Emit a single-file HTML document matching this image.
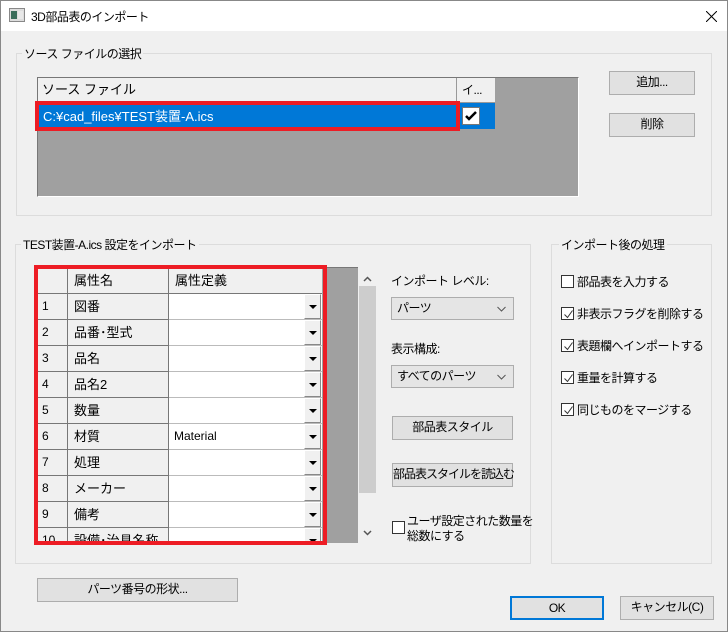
<!DOCTYPE html>
<html><head><meta charset="utf-8"><style>
*{box-sizing:border-box;margin:0;padding:0}
body{width:728px;height:632px;background:#f0f0f0;font-family:"Liberation Sans","Noto Sans CJK JP",sans-serif;font-size:12px;color:#000;position:relative;overflow:hidden;letter-spacing:-0.5px}
.a{position:absolute;white-space:nowrap}
.win{left:0;top:0;width:728px;height:632px;border:1px solid #888}
.title{left:1px;top:1px;width:726px;height:30px;background:#fff}
.grp{border:1px solid #dcdcdc}
.lbl{background:#f0f0f0;padding:0 2px}
.btn{background:#e1e1e1;border:1px solid #adadad;text-align:center;line-height:21px}
.cb{width:13px;height:13px;border:1px solid #333;background:#fff}
.cb svg{position:absolute;left:1px;top:1px}
.combo{background:#e5e5e5;border:1px solid #adadad;padding-left:5px;line-height:20px}
.cell{border-right:1px solid #777;border-bottom:1px solid #777;background:#f0f0f0;padding-left:6px;line-height:25px;font-size:13px;letter-spacing:0}
.vc{background:#fff;border-bottom:1px solid #bbb;padding-left:5px;line-height:24px;letter-spacing:0}
.dd{width:17px;height:25px;background:#f0f0f0;border:1px solid #fff;border-right-color:#888;border-bottom-color:#888}
.dd:after{content:"";position:absolute;left:4px;top:10px;border-left:4px solid transparent;border-right:4px solid transparent;border-top:4px solid #000}
</style></head><body>
<div class="a win"></div>
<div class="a title"></div>
<svg class="a" style="left:9px;top:8px" width="16" height="14"><rect x="0.5" y="0.5" width="15" height="13" fill="#ddd" stroke="#888"/><rect x="2" y="3" width="6" height="8" fill="#3a6d5a"/><rect x="9" y="3" width="5" height="8" fill="#e8e8e8"/></svg>
<div class="a" style="left:31px;top:8px;font-size:12px">3D部品表のインポート</div>
<svg class="a" style="left:706px;top:11px" width="11" height="11"><path d="M0 0L11 11M11 0L0 11" stroke="#000" stroke-width="1"/></svg>

<div class="a grp" style="left:16px;top:53px;width:696px;height:163px"></div>
<div class="a lbl" style="left:22px;top:45px">ソース ファイルの選択</div>
<div class="a" style="left:37px;top:77px;width:542px;height:120px;background:#a0a0a0;border:1px solid #fff;border-top-color:#777;border-left-color:#777"></div>
<div class="a" style="left:38px;top:78px;width:419px;height:25px;background:#f0f0f0;border-right:1px solid #999;border-bottom:1px solid #999;padding-left:4px;line-height:24px;font-size:13px;letter-spacing:0">ソース ファイル</div>
<div class="a" style="left:457px;top:78px;width:38px;height:25px;background:#f0f0f0;border-bottom:1px solid #999;padding-left:5px;line-height:24px">イ...</div>
<div class="a" style="left:38px;top:103px;width:457px;height:26px;background:#0078d7"></div>
<div class="a" style="left:43px;top:106px;color:#fff;font-size:13px;letter-spacing:0">C:¥cad_files¥TEST装置-A.ics</div>
<div class="a" style="left:462px;top:107px;width:18px;height:18px;background:#fff;border:1px solid #777"><svg width="16" height="16"><path d="M3 8l3 3 7-7" stroke="#000" stroke-width="2.5" fill="none"/></svg></div>
<div class="a" style="left:35px;top:101px;width:425px;height:30px;border:4px solid #ed1c24"></div>
<div class="a btn" style="left:609px;top:71px;width:86px;height:24px">追加...</div>
<div class="a btn" style="left:609px;top:113px;width:86px;height:24px">削除</div>

<div class="a grp" style="left:15px;top:244px;width:516px;height:320px"></div>
<div class="a lbl" style="left:21px;top:236px">TEST装置-A.ics 設定をインポート</div>
<div class="a" style="left:37px;top:267px;width:321px;height:276px;background:#a0a0a0;border-top:1px solid #777"></div>
<div class="a" style="left:358px;top:267px;width:19px;height:276px;background:#f0f0f0"></div>
<div class="a" style="left:359px;top:286px;width:17px;height:207px;background:#cdcdcd"></div>
<svg class="a" style="left:363px;top:276px" width="9" height="6"><path d="M1 5l3.5-3.5L8 5" stroke="#555" stroke-width="1.5" fill="none"/></svg>
<svg class="a" style="left:363px;top:530px" width="9" height="6"><path d="M1 1l3.5 3.5L8 1" stroke="#555" stroke-width="1.5" fill="none"/></svg>
<div id="grid" class="a" style="left:38px;top:268px;width:284px;height:274px;overflow:hidden">
<div class="a cell" style="left:0;top:0;width:30px;height:26px"></div>
<div class="a cell" style="left:30px;top:0;width:101px;height:26px">属性名</div>
<div class="a cell" style="left:131px;top:0;width:153px;height:26px;border-right:none">属性定義</div>
</div>
<script>
var n=["図番","品番･型式","品名","品名2","数量","材質","処理","メーカー","備考","設備･治具名称"];
var g=document.getElementById('grid'),h='';
for(var i=0;i<10;i++){var t=26+26*i;
h+='<div class="a cell" style="left:0;top:'+t+'px;width:30px;height:26px;font-size:12px;padding-left:4px">'+(i+1)+'</div>';
h+='<div class="a cell" style="left:30px;top:'+t+'px;width:101px;height:26px">'+n[i]+'</div>';
h+='<div class="a vc" style="left:131px;top:'+t+'px;width:153px;height:26px">'+(i==5?'Material':'')+'</div>';
h+='<div class="a dd" style="left:266px;top:'+t+'px"></div>';}
g.innerHTML+=h;
</script>
<div class="a" style="left:34px;top:265px;width:293px;height:280px;border:4px solid #ed1c24"></div>

<div class="a" style="left:391px;top:272px">インポート レベル:</div>
<div class="a combo" style="left:391px;top:297px;width:123px;height:23px">パーツ<svg class="a" style="right:7px;top:8px" width="9" height="6"><path d="M0.5 1l4 4 4-4" stroke="#555" fill="none"/></svg></div>
<div class="a" style="left:391px;top:340px">表示構成:</div>
<div class="a combo" style="left:391px;top:365px;width:123px;height:23px">すべてのパーツ<svg class="a" style="right:7px;top:8px" width="9" height="6"><path d="M0.5 1l4 4 4-4" stroke="#555" fill="none"/></svg></div>
<div class="a btn" style="left:392px;top:416px;width:121px;height:24px">部品表スタイル</div>
<div class="a btn" style="left:392px;top:463px;width:121px;height:24px;letter-spacing:-1px">部品表スタイルを読込む</div>
<div class="a cb" style="left:392px;top:521px"></div>
<div class="a" style="left:407px;top:514px;line-height:15px">ユーザ設定された数量を<br>総数にする</div>

<div class="a grp" style="left:551px;top:244px;width:161px;height:320px"></div>
<div class="a lbl" style="left:559px;top:236px">インポート後の処理</div>
<div class="a cb" style="left:561px;top:275px"></div><div class="a" style="left:577px;top:273px">部品表を入力する</div>
<div class="a cb" style="left:561px;top:307px"><svg width="11" height="11"><path d="M1.5 5.5l3 3 5-7" stroke="#333" fill="none"/></svg></div><div class="a" style="left:577px;top:305px">非表示フラグを削除する</div>
<div class="a cb" style="left:561px;top:339px"><svg width="11" height="11"><path d="M1.5 5.5l3 3 5-7" stroke="#333" fill="none"/></svg></div><div class="a" style="left:577px;top:337px">表題欄へインポートする</div>
<div class="a cb" style="left:561px;top:371px"><svg width="11" height="11"><path d="M1.5 5.5l3 3 5-7" stroke="#333" fill="none"/></svg></div><div class="a" style="left:577px;top:369px">重量を計算する</div>
<div class="a cb" style="left:561px;top:403px"><svg width="11" height="11"><path d="M1.5 5.5l3 3 5-7" stroke="#333" fill="none"/></svg></div><div class="a" style="left:577px;top:401px">同じものをマージする</div>

<div class="a btn" style="left:37px;top:578px;width:201px;height:24px">パーツ番号の形状...</div>
<div class="a btn" style="left:510px;top:596px;width:94px;height:24px;border:2px solid #0078d7;line-height:20px">OK</div>
<div class="a btn" style="left:620px;top:596px;width:94px;height:24px">キャンセル(C)</div>
</body></html>
